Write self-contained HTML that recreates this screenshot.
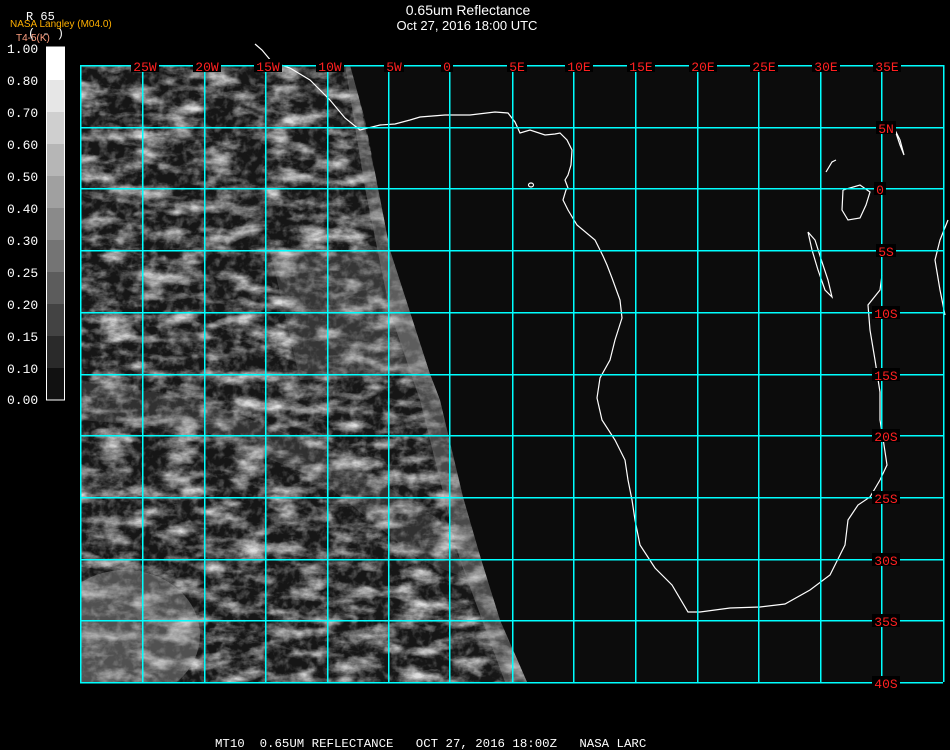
<!DOCTYPE html>
<html><head><meta charset="utf-8"><style>
html,body{margin:0;padding:0;background:#000;}
body{width:950px;height:750px;overflow:hidden;position:relative;font-family:"Liberation Mono",monospace;}
svg{position:absolute;left:0;top:0;}
</style></head><body>
<svg width="950" height="750" viewBox="0 0 950 750" xmlns="http://www.w3.org/2000/svg">
<defs>
<filter id="cl" x="0" y="0" width="100%" height="100%">
<feTurbulence type="fractalNoise" baseFrequency="0.03 0.07" numOctaves="5" seed="3" result="n"/>
<feColorMatrix in="n" type="matrix" values="0 0 0 0 0  0 0 0 0 0  0 0 0 0 0  2.4 0 0 0 -1.05" result="a"/>
<feFlood flood-color="#ffffff" result="w"/>
<feComposite in="w" in2="a" operator="in"/>
</filter>
<filter id="cl2" x="0" y="0" width="100%" height="100%">
<feTurbulence type="fractalNoise" baseFrequency="0.12" numOctaves="3" seed="9" result="n"/>
<feColorMatrix in="n" type="matrix" values="0 0 0 0 0  0 0 0 0 0  0 0 0 0 0  2.2 0 0 0 -1.0" result="a"/>
<feFlood flood-color="#ffffff" result="w"/>
<feComposite in="w" in2="a" operator="in"/>
</filter>
<clipPath id="earth"><polygon points="80,65 350,65 365,120 378,188 390,250 410,312 430,374 440,400 463,497 481,559 500,620 527,682 80,682"/></clipPath>
</defs>
<rect x="80" y="65" width="863" height="617" fill="#0c0c0c"/>
<g clip-path="url(#earth)">
<rect x="80" y="65" width="460" height="617" fill="#161616"/>
<rect x="80" y="65" width="460" height="617" filter="url(#cl)" opacity="0.85"/>
<rect x="80" y="65" width="460" height="617" filter="url(#cl2)" opacity="0.35"/>
<ellipse cx="125" cy="635" rx="75" ry="65" fill="#aaa" opacity="0.4"/>
<polygon points="270,250 390,250 430,374 300,380" fill="#999" opacity="0.25"/>
<polygon points="80,380 200,400 330,450 440,520 470,580 420,560 320,480 200,430 80,420" fill="#aaa" opacity="0.18"/>
<polygon points="345,65 352,65 378,188 410,312 440,400 481,559 527,682 505,682 460,560 420,400 390,312 365,188" fill="#999" opacity="0.4"/>
</g>
<g fill="none" stroke="#fff" stroke-width="1.2">
<polyline points="255,44 262,50 272,62 290,68 310,80 330,100 345,118 360,130 380,125 395,124 410,120 420,117 445,115 470,115 495,112 508,113 515,122 520,133 530,130 545,135 555,134 560,133 567,140 572,150 571,165 568,175 565,180 568,188 566,190 563,200 568,210 577,225 595,240 603,256 607,265 612,278 620,300 622,318 615,340 610,360 600,378 597,398 602,420 615,440 625,460 628,480 632,500 635,520 640,545 655,568 672,585 688,612 700,612 730,608 760,607 785,604 810,590 830,575 845,545 848,520 858,505 870,497 880,480 887,465 884,445 880,420 880,392 875,360 870,330 868,305 880,290 882,275"/>
<polyline points="808,232 812,250 818,270 825,290 832,297 828,280 822,262 815,240 808,232"/>
<polyline points="895,130 900,145 904,155 900,140 895,130"/>
<polyline points="843,190 860,185 870,192 866,205 860,218 848,220 842,210 843,190"/>
<polyline points="948,220 940,240 935,260 940,290 945,315"/>
<polyline points="826,172 832,162 836,160"/>
<ellipse cx="531" cy="185" rx="2.5" ry="2"/>
</g>
<g stroke="#00ffff" stroke-width="1.5" shape-rendering="crispEdges">
<line x1="80.5" y1="65" x2="80.5" y2="682"/><line x1="142.5" y1="65" x2="142.5" y2="682"/><line x1="204.5" y1="65" x2="204.5" y2="682"/><line x1="265.5" y1="65" x2="265.5" y2="682"/><line x1="327.5" y1="65" x2="327.5" y2="682"/><line x1="388.5" y1="65" x2="388.5" y2="682"/><line x1="449.5" y1="65" x2="449.5" y2="682"/><line x1="512.5" y1="65" x2="512.5" y2="682"/><line x1="573.5" y1="65" x2="573.5" y2="682"/><line x1="635.5" y1="65" x2="635.5" y2="682"/><line x1="697.5" y1="65" x2="697.5" y2="682"/><line x1="758.5" y1="65" x2="758.5" y2="682"/><line x1="820.5" y1="65" x2="820.5" y2="682"/><line x1="881.5" y1="65" x2="881.5" y2="682"/><line x1="943.5" y1="65" x2="943.5" y2="682"/>
<line x1="80" y1="65.5" x2="943" y2="65.5"/><line x1="80" y1="127.5" x2="943" y2="127.5"/><line x1="80" y1="188.5" x2="943" y2="188.5"/><line x1="80" y1="250.5" x2="943" y2="250.5"/><line x1="80" y1="312.5" x2="943" y2="312.5"/><line x1="80" y1="374.5" x2="943" y2="374.5"/><line x1="80" y1="435.5" x2="943" y2="435.5"/><line x1="80" y1="497.5" x2="943" y2="497.5"/><line x1="80" y1="559.5" x2="943" y2="559.5"/><line x1="80" y1="620.5" x2="943" y2="620.5"/><line x1="80" y1="682.5" x2="943" y2="682.5"/>
</g>
<g font-family="Liberation Mono, monospace" font-size="13" fill="#ff2020" text-anchor="middle">
<g fill="#000"><rect x="131" y="59" width="28" height="13"/><rect x="193" y="59" width="28" height="13"/><rect x="254" y="59" width="28" height="13"/><rect x="316" y="59" width="28" height="13"/><rect x="384" y="59" width="20" height="13"/><rect x="441" y="59" width="12" height="13"/><rect x="507" y="59" width="20" height="13"/><rect x="565" y="59" width="28" height="13"/><rect x="627" y="59" width="28" height="13"/><rect x="689" y="59" width="28" height="13"/><rect x="750" y="59" width="28" height="13"/><rect x="812" y="59" width="28" height="13"/><rect x="873" y="59" width="28" height="13"/>
<rect x="876" y="121" width="20" height="13"/><rect x="874" y="182" width="12" height="13"/><rect x="876" y="244" width="20" height="13"/><rect x="872" y="306" width="28" height="13"/><rect x="872" y="368" width="28" height="13"/><rect x="872" y="429" width="28" height="13"/><rect x="872" y="491" width="28" height="13"/><rect x="872" y="553" width="28" height="13"/><rect x="872" y="614" width="28" height="13"/><rect x="872" y="676" width="28" height="13"/></g>
<text x="145" y="71">25W</text><text x="207" y="71">20W</text><text x="268" y="71">15W</text><text x="330" y="71">10W</text><text x="394" y="71">5W</text><text x="447" y="71">0</text><text x="517" y="71">5E</text><text x="579" y="71">10E</text><text x="641" y="71">15E</text><text x="703" y="71">20E</text><text x="764" y="71">25E</text><text x="826" y="71">30E</text><text x="887" y="71">35E</text>
<text x="886" y="133">5N</text><text x="880" y="194">0</text><text x="886" y="256">5S</text><text x="886" y="318">10S</text><text x="886" y="380">15S</text><text x="886" y="441">20S</text><text x="886" y="503">25S</text><text x="886" y="565">30S</text><text x="886" y="626">35S</text><text x="886" y="688">40S</text>
</g>
<g>
<rect x="46" y="47" width="19" height="33" fill="#fff"/><rect x="46" y="80" width="19" height="32" fill="#e6e6e6"/><rect x="46" y="112" width="19" height="32" fill="#cfcfcf"/><rect x="46" y="144" width="19" height="32" fill="#b6b6b6"/><rect x="46" y="176" width="19" height="32" fill="#a0a0a0"/><rect x="46" y="208" width="19" height="32" fill="#8a8a8a"/><rect x="46" y="240" width="19" height="32" fill="#747474"/><rect x="46" y="272" width="19" height="32" fill="#5c5c5c"/><rect x="46" y="304" width="19" height="32" fill="#434343"/><rect x="46" y="336" width="19" height="32" fill="#2a2a2a"/><rect x="46" y="368" width="19" height="32" fill="#111"/>
<rect x="46.5" y="47" width="18" height="353" fill="none" stroke="#fff" stroke-width="1"/>
</g>
<g font-family="Liberation Mono, monospace" font-size="13" fill="#fff">
<text x="7" y="53">1.00</text><text x="7" y="85">0.80</text><text x="7" y="117">0.70</text><text x="7" y="149">0.60</text><text x="7" y="181">0.50</text><text x="7" y="213">0.40</text><text x="7" y="245">0.30</text><text x="7" y="277">0.25</text><text x="7" y="309">0.20</text><text x="7" y="341">0.15</text><text x="7" y="373">0.10</text><text x="7" y="404">0.00</text>
<text x="26" y="20" font-size="12">R 65</text><text x="28" y="37" font-size="12">( - )</text>
</g>
<text x="10" y="27" font-family="Liberation Sans, sans-serif" font-size="10" fill="#ffb000">NASA Langley (M04.0)</text>
<text x="16" y="41" font-family="Liberation Sans, sans-serif" font-size="10" fill="#ffa080">T4-5(K)</text>
<text x="468" y="15" font-family="Liberation Sans, sans-serif" font-size="14" fill="#fff" text-anchor="middle">0.65um Reflectance</text>
<text x="467" y="30" font-family="Liberation Sans, sans-serif" font-size="13" fill="#fff" text-anchor="middle">Oct 27, 2016 18:00 UTC</text>
<text x="215" y="747" font-family="Liberation Mono, monospace" font-size="12.4" fill="#fff" xml:space="preserve">MT10  0.65UM REFLECTANCE   OCT 27, 2016 18:00Z   NASA LARC</text>
</svg>
</body></html>
